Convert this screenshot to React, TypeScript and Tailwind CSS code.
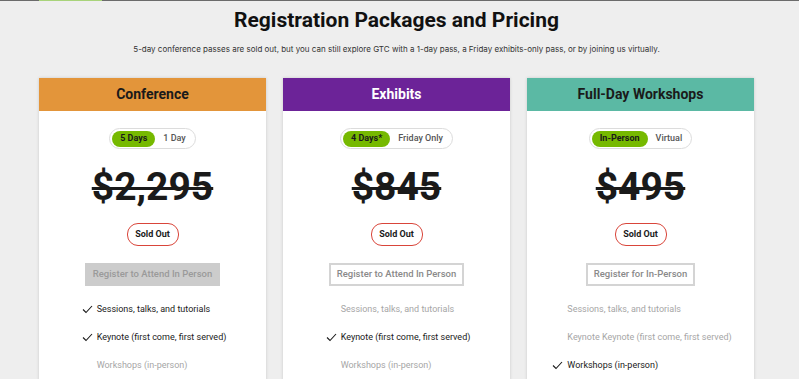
import React from 'react';

type Feature = { label: string; included: boolean };

type Plan = {
  title: string;
  headerClass: string;
  options: [string, string];
  price: string;
  cta: string;
  ctaDisabled: boolean;
  features: Feature[];
};

const plans: Plan[] = [
  {
    title: 'Conference',
    headerClass: 'bg-[#e3953a] text-[#1a1a1a]',
    options: ['5 Days', '1 Day'],
    price: '$2,295',
    cta: 'Register to Attend In Person',
    ctaDisabled: true,
    features: [
      { label: 'Sessions, talks, and tutorials', included: true },
      { label: 'Keynote (first come, first served)', included: true },
      { label: 'Workshops (in-person)', included: false },
    ],
  },
  {
    title: 'Exhibits',
    headerClass: 'bg-[#6c2398] text-white',
    options: ['4 Days*', 'Friday Only'],
    price: '$845',
    cta: 'Register to Attend In Person',
    ctaDisabled: false,
    features: [
      { label: 'Sessions, talks, and tutorials', included: false },
      { label: 'Keynote (first come, first served)', included: true },
      { label: 'Workshops (in-person)', included: false },
    ],
  },
  {
    title: 'Full-Day Workshops',
    headerClass: 'bg-[#5bb9a4] text-[#1a1a1a]',
    options: ['In-Person', 'Virtual'],
    price: '$495',
    cta: 'Register for In-Person',
    ctaDisabled: false,
    features: [
      { label: 'Sessions, talks, and tutorials', included: false },
      { label: 'Keynote Keynote (first come, first served)', included: false },
      { label: 'Workshops (in-person)', included: true },
    ],
  },
];

const Check = () => (
  <svg width="11" height="9" viewBox="0 0 11 9" fill="none" className="shrink-0">
    <path d="M1 4.5 L4 7.5 L10 1" stroke="#1a1a1a" strokeWidth="1.1" />
  </svg>
);

const PlanCard: React.FC<{ plan: Plan }> = ({ plan }) => (
  <div className="w-[227px] bg-white shadow-[0_0_3px_rgba(0,0,0,0.15)] h-[303px]">
    <div className={`h-[33px] flex items-center justify-center text-[14px] font-bold ${plan.headerClass}`}>
      {plan.title}
    </div>
    <div className="flex flex-col items-center pt-[17px]">
      <div className="flex items-center h-[21px] rounded-full border border-[#dcdcdc] px-[2px]">
        <span className="h-[16px] px-[8px] flex items-center rounded-full bg-[#76b900] text-[9px] font-bold text-[#1a1a1a]">
          {plan.options[0]}
        </span>
        <span className="pl-[8px] pr-[7px] text-[9px] font-medium text-[#555]">{plan.options[1]}</span>
      </div>
      <div className="mt-[16px] h-[44px] flex items-center text-[39px] font-bold text-[#1a1a1a] line-through decoration-[3px] leading-none">
        {plan.price}
      </div>
      <div className="mt-[14px] h-[23px] w-[52px] flex items-center justify-center rounded-[11px] border-[1.5px] border-[#d9453a] text-[9px] font-bold text-[#1a1a1a]">
        Sold Out
      </div>
      <div
        className={`mt-[17px] h-[23px] px-[6px] flex items-center text-[9.5px] font-medium ${
          plan.ctaDisabled
            ? 'bg-[#cccccc] text-[#9a9a9a] border-2 border-[#cccccc]'
            : 'bg-white text-[#8a8a8a] border-2 border-[#d4d4d4]'
        }`}
      >
        {plan.cta}
      </div>
      <div className="mt-[16px] flex flex-col gap-[13px] pl-[3px]">
        {plan.features.map((f) => (
          <div key={f.label} className="flex items-center h-[15px] text-[9px]">
            <span className="w-[15px] flex items-center">{f.included && <Check />}</span>
            <span className={f.included ? 'text-[#1a1a1a]' : 'text-[#a6a6a6]'}>{f.label}</span>
          </div>
        ))}
      </div>
    </div>
  </div>
);

export default function App() {
  return (
    <div
      className="w-[799px] h-[379px] overflow-hidden bg-[#eeeeee] relative"
      style={{ fontFamily: 'Roboto, "Noto Sans", sans-serif' }}
    >
      <div className="h-px bg-[#6b6b6b] flex">
        <div className="ml-[39px] w-[63px] bg-[#a8d37a]" />
      </div>
      <div className="pr-[6px] flex flex-col items-center">
        <h1 className="mt-[7px] text-[21px] font-bold text-[#111] leading-[25px]">
          Registration Packages and Pricing
        </h1>
        <p
          className="mt-[11px] text-[8px] text-[#333] leading-[10px]"
          style={{ fontFamily: 'Inter, "Noto Sans", sans-serif' }}
        >
          5-day conference passes are sold out, but you can still explore GTC with a 1-day pass, a Friday exhibits-only pass, or by joining us virtually.
        </p>
        <div className="mt-[24px] flex gap-[17px]">
          {plans.map((p) => (
            <PlanCard key={p.title} plan={p} />
          ))}
        </div>
      </div>
    </div>
  );
}
